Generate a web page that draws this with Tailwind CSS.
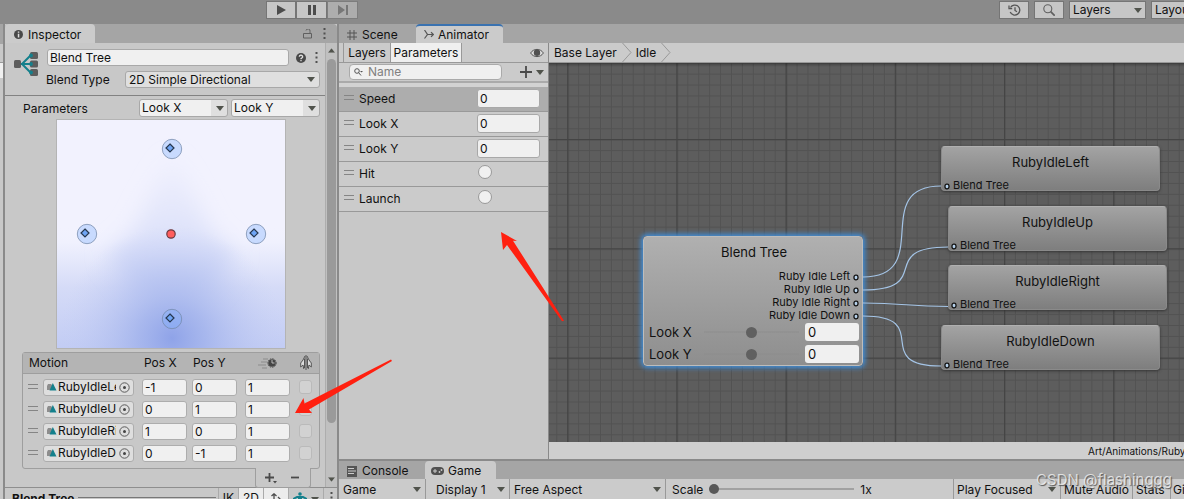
<!DOCTYPE html>
<html lang="en">
<head>
<meta charset="utf-8">
<title>Animator</title>
<script src="https://cdn.jsdelivr.net/npm/@tailwindcss/browser@4"></script>
</head>
<body class="relative flex h-screen flex-col overflow-hidden bg-[#8a8a8a] font-['Inter','Noto_Sans',sans-serif] text-xs leading-4 text-[#111]">

<svg width="0" height="0" class="absolute" aria-hidden="true">
  <symbol id="caret" viewBox="0 0 8 5"><path d="M0 0h8L4 5z" fill="#50534c"/></symbol>
  <symbol id="handle" viewBox="0 0 10 5"><path d="M0 .5h10M0 4.500h10" stroke="#858585"/></symbol>
  <symbol id="dots" viewBox="0 0 3 11"><path d="M.5 0h2v2h-2zM.5 4.500h2v2h-2zM.5 9h2v2h-2z" fill="#505050"/></symbol>
  <symbol id="clip" viewBox="0 0 10 8"><path d="M1 1h3l2 2-2 4H0V3z" fill="#8d8d8d"/><path d="M5.800 0L9.500 7.500H2.500z" fill="#14808c"/></symbol>
  <symbol id="pick" viewBox="0 0 11 11"><circle cx="5.500" cy="5.500" r="4.700" fill="none" stroke="#5a5a5a"/><circle cx="5.500" cy="5.500" r="1.500" fill="#444"/></symbol>
  <symbol id="port" viewBox="0 0 6 7"><rect x="1" y="1.200" width="4" height="4.600" rx="1.800" fill="#b5d0ea" stroke="#111" stroke-width="1.300"/></symbol>
  <symbol id="spot" viewBox="0 0 22 22"><circle cx="11" cy="11" r="9.700" fill="#7ab0ff" fill-opacity=".35" stroke="#7388aa" stroke-opacity=".75"/><path d="M9 6l4 4-4 4-4-4z" fill="#6fa5f5" stroke="#26374f" stroke-width="1.200"/></symbol>
</svg>

<!-- Main toolbar -->
<header class="flex h-6 shrink-0 items-start pl-[266px] pt-px">
  <button aria-label="Play" class="flex h-[18px] w-[30px] items-center justify-center border border-[#757575] bg-[#c6c6c6]"><svg width="9" height="10"><path d="M0 0l9 5-9 5z" fill="#4c4c4c"/></svg></button>
  <button aria-label="Pause" class="flex h-[18px] w-[31px] items-center justify-center border border-[#757575] bg-[#c6c6c6]"><svg width="8" height="10"><path d="M0 0h3v10H0zM5 0h3v10H5z" fill="#4c4c4c"/></svg></button>
  <button aria-label="Step" class="flex h-[18px] w-[31px] items-center justify-center border border-[#7d7d7d] bg-[#adadad]"><svg width="10" height="10"><path d="M0 0l7 5-7 5zM8 0h2v10H8z" fill="#777"/></svg></button>
  <div class="-mr-6 ml-auto flex shrink-0 gap-[5px]">
    <button aria-label="Undo history" class="flex h-[18px] w-[30px] items-center justify-center border border-[#757575] bg-[#c6c6c6]"><svg width="13" height="12" fill="none" stroke="#555" stroke-width="1.300"><path d="M2.500 3.500a5 5 0 1 1-.3 4.500M1 1.500v3.200h3.200M7 3.200v3.300l2 1.200"/></svg></button>
    <button aria-label="Search" class="flex h-[18px] w-[30px] items-center justify-center border border-[#757575] bg-[#c6c6c6]"><svg width="12" height="12" fill="none" stroke="#606060" stroke-width="1.100"><circle cx="4.800" cy="4.800" r="4"/><path d="M7.700 7.700l4 4" stroke-width="1.700"/></svg></button>
    <div class="relative">
      <select aria-label="Layers" class="h-[18px] w-[77px] appearance-none border border-[#757575] bg-[#c6c6c6] pl-[3px]"><option>Layers</option></select>
      <svg class="pointer-events-none absolute right-1 top-[7px] h-[5px] w-2"><use href="#caret"/></svg>
    </div>
    <select aria-label="Layout" class="h-[18px] w-[57px] appearance-none border border-[#757575] bg-[#c6c6c6] pl-[3px]"><option>Layout</option></select>
  </div>
</header>

<div class="flex min-h-0 flex-1">
  <!-- Edge of the docked panel on the left -->
  <div class="w-[3px] shrink-0 bg-[#c8c8c8]"><div class="h-5 bg-[#a5a5a5]"></div><div class="mt-[18px] h-4 border-t border-[#999] bg-[#f0f0f0]"></div></div>

  <!-- Inspector -->
  <aside class="ml-0.5 flex w-[332px] shrink-0 flex-col overflow-hidden bg-[#c8c8c8]">
    <div class="flex h-[19px] shrink-0 items-center rounded-t bg-[#a5a5a5]">
      <button class="flex h-full w-[90px] items-center gap-[5px] rounded-t bg-[#cbcbcb] pl-[9px] pt-0.5"><svg width="9" height="9"><circle cx="4.500" cy="4.500" r="4.500" fill="#484848"/><path d="M3.800 1.500h1.500v1.300H3.800zM3.800 3.700h1.500v3.800H3.800z" fill="#ddd"/></svg>Inspector</button>
      <svg class="ml-auto" width="9" height="10" fill="none" stroke="#606060"><path d="M.5 4.500h8v4.500h-8zM7 4.500V2.500a2 2 0 0 0-4-1"/></svg>
      <svg class="ml-[11px] mr-[11px] h-[11px] w-[3px]"><use href="#dots"/></svg>
    </div>

    <div class="flex h-[444px] shrink-0">
      <div class="min-w-0 flex-1">
        <!-- Asset header -->
        <div class="flex h-[53px] border-b border-[#828282] pl-2 pr-[5px] pt-[6px]">
          <svg class="mt-[3px] shrink-0" width="27" height="26"><rect x="1" y="8" width="7" height="8" rx="1.500" fill="#5d5d5d"/><rect x="17" y="0" width="8" height="7" rx="1.500" fill="#5d5d5d"/><rect x="17" y="8.500" width="8" height="7" rx="1.500" fill="#5d5d5d"/><rect x="17" y="17" width="8" height="7" rx="1.500" fill="#5d5d5d"/><path d="M18 3L9 12l9 9M8 12h11" fill="none" stroke="#14808c" stroke-width="2"/><circle cx="18" cy="3.500" r="1.900" fill="#14808c"/><circle cx="18" cy="12" r="1.900" fill="#14808c"/><circle cx="18" cy="20.500" r="1.900" fill="#14808c"/></svg>
          <div class="ml-[7px] flex-1">
            <div class="flex items-center">
              <input aria-label="Name" value="Blend Tree" class="h-[17px] w-[242px] rounded-[3px] border border-[#a8a8a8] bg-[#f0f0f0] px-0.5">
              <svg class="ml-[7px]" width="10" height="10"><circle cx="5" cy="5" r="5" fill="#484848"/><path d="M3.300 3.800a1.700 1.500 0 1 1 2.400 1.300L5 5.600v.6M5 7v1.300" fill="none" stroke="#ddd" stroke-width="1.300"/></svg>
              <svg class="ml-[9px] h-[11px] w-[3px]"><use href="#dots"/></svg>
            </div>
            <div class="mt-1 flex items-center justify-between">
              <label for="blend-type" class="-ml-px pt-0.5">Blend Type</label>
              <div class="relative">
                <select id="blend-type" class="block h-[17px] w-[195px] appearance-none rounded-[3px] border border-[#a8a8a8] bg-[#dfdfdf] pl-[3px]"><option>2D Simple Directional</option></select>
                <svg class="pointer-events-none absolute right-[5px] top-[6px] h-[5px] w-2"><use href="#caret"/></svg>
              </div>
            </div>
          </div>
        </div>

        <div class="flex items-center pl-[18px] pr-[5px] pt-[3px]">
          <span class="mr-auto pt-0.5">Parameters</span>
          <div class="relative mr-[3px]">
            <select aria-label="Parameter X" class="block h-[18px] w-[89px] appearance-none rounded-[3px] border border-[#a8a8a8] bg-linear-to-r from-[#f0f0f0] from-82% to-[#dfdfdf] to-82% pl-0.5"><option>Look X</option></select>
            <svg class="pointer-events-none absolute right-1 top-[7px] h-[5px] w-2"><use href="#caret"/></svg>
          </div>
          <div class="relative">
            <select aria-label="Parameter Y" class="block h-[18px] w-[89px] appearance-none rounded-[3px] border border-[#a8a8a8] bg-linear-to-r from-[#f0f0f0] from-82% to-[#dfdfdf] to-82% pl-0.5"><option>Look Y</option></select>
            <svg class="pointer-events-none absolute right-1 top-[7px] h-[5px] w-2"><use href="#caret"/></svg>
          </div>
        </div>

        <!-- Blend space: influence of the selected motion -->
        <svg class="ml-[51px] mt-0.5 block border border-[#b4b4b4]" width="230" height="230" viewBox="0 0 228 228">
          <defs>
            <linearGradient id="low" x1="0" y1="0" x2="0" y2="1"><stop offset="0" stop-color="#f2f2fe"/><stop offset=".12" stop-color="#f0f1fe"/><stop offset=".5" stop-color="#d5dbf7"/><stop offset="1" stop-color="#c2ccf4"/></linearGradient>
            <radialGradient id="core" gradientUnits="userSpaceOnUse" cx="115" cy="218" r="112"><stop offset="0" stop-color="#8fa3e8"/><stop offset=".3" stop-color="#9dafeb" stop-opacity=".75"/><stop offset="1" stop-color="#c3cdf4" stop-opacity="0"/></radialGradient>
            <linearGradient id="cone" gradientUnits="userSpaceOnUse" x1="0" y1="30" x2="0" y2="175"><stop offset="0" stop-color="#e0e4fa" stop-opacity="0"/><stop offset=".6" stop-color="#dde2fa"/><stop offset="1" stop-color="#c0cbf3"/></linearGradient>
            <filter id="soft" filterUnits="userSpaceOnUse" x="-40" y="-40" width="310" height="310"><feGaussianBlur stdDeviation="11"/></filter>
          </defs>
          <rect width="228" height="228" fill="#f2f2fe"/>
          <rect y="108" width="228" height="120" fill="url(#low)"/>
          <path d="M115 30L75 114 50 135 80 175h70l30-40-25-21z" fill="url(#cone)" filter="url(#soft)"/>
          <rect y="96" width="228" height="132" fill="url(#core)"/>
          <circle cx="114" cy="114" r="4.200" fill="#ff5d5d" stroke="#6b3a40" stroke-width="1.200"/>
          <use href="#spot" x="104" y="18" width="22" height="22"/>
          <use href="#spot" x="19" y="103" width="22" height="22"/>
          <use href="#spot" x="188" y="103" width="22" height="22"/>
          <use href="#spot" x="104" y="188" width="22" height="22"/>
        </svg>

        <!-- Motion list -->
        <div class="ml-[17px] mr-[5px] mt-[3px] h-[117px] rounded-[3px] border border-[#9e9e9e]">
          <table class="w-full table-fixed text-left">
            <colgroup><col class="w-[20px]"><col class="w-[99px]"><col class="w-[50px]"><col class="w-[53px]"><col class="w-[54px]"><col></colgroup>
            <thead>
              <tr class="h-5 border-b border-[#9e9e9e] bg-[#b4b4b4]">
                <th colspan="2" class="pl-1.5 font-normal">Motion</th><th class="pl-0.5 font-normal">Pos X</th><th class="pl-px font-normal">Pos Y</th>
                <th aria-label="Speed"><svg class="ml-[13px]" width="20" height="12"><path d="M5 2h5M3 5h6M0 8h8M4 11h5" stroke="#8c8c8c"/><circle cx="14" cy="6" r="3.800" fill="#444"/><circle cx="14" cy="6" r="4.300" fill="none" stroke="#555" stroke-dasharray="1.500 1"/><path d="M14 3v3h2.500" fill="none" stroke="#bbb"/></svg></th>
                <th aria-label="Mirror"><svg class="ml-px" width="12" height="15" fill="none" stroke="#555"><path d="M5 1L3 5 .7 8v4L3 10l.8 4M7 1l2 4 2.300 3v4L9 10l-.8 4" fill="#ddd"/><path d="M6 0v15M4.500 3.500V13M7.500 3.500V13"/></svg></th>
              </tr>
            </thead>
            <tbody>
              <tr class="h-[22px] align-top">
                <td class="pt-[10px]"><svg class="ml-[5px] h-[5px] w-2.5"><use href="#handle"/></svg></td>
                <td class="pt-[5px]"><div class="flex h-[17px] w-[91px] items-center rounded-[3px] border border-[#adadad] bg-[#dedede] pl-[3px] pr-[3px]"><svg class="h-2 w-2.5 shrink-0"><use href="#clip"/></svg><span class="ml-px w-[58px] overflow-hidden whitespace-nowrap">RubyIdleLeft</span><button aria-label="Pick motion" class="ml-auto"><svg class="h-[11px] w-[11px]"><use href="#pick"/></svg></button></div></td>
                <td class="pt-[5px]"><input aria-label="Pos X" value="-1" class="block h-[17px] w-[45px] rounded-[3px] border border-[#adadad] bg-[#f0f0f0] px-0.5"></td>
                <td class="pt-[5px]"><input aria-label="Pos Y" value="0" class="block h-[17px] w-[45px] rounded-[3px] border border-[#adadad] bg-[#f0f0f0] px-0.5"></td>
                <td class="pt-[5px]"><input aria-label="Speed" value="1" class="block h-[17px] w-[45px] rounded-[3px] border border-[#adadad] bg-[#f0f0f0] px-0.5"></td>
                <td class="pt-[6px]"><input aria-label="Mirror" type="checkbox" class="block h-[14px] w-[13px] appearance-none rounded-[3px] border border-[#bababa] bg-[#d2d2d2]"></td>
              </tr>
              <tr class="h-[22px] align-top">
                <td class="pt-[10px]"><svg class="ml-[5px] h-[5px] w-2.5"><use href="#handle"/></svg></td>
                <td class="pt-[5px]"><div class="flex h-[17px] w-[91px] items-center rounded-[3px] border border-[#adadad] bg-[#dedede] pl-[3px] pr-[3px]"><svg class="h-2 w-2.5 shrink-0"><use href="#clip"/></svg><span class="ml-px w-[58px] overflow-hidden whitespace-nowrap">RubyIdleU</span><button aria-label="Pick motion" class="ml-auto"><svg class="h-[11px] w-[11px]"><use href="#pick"/></svg></button></div></td>
                <td class="pt-[5px]"><input aria-label="Pos X" value="0" class="block h-[17px] w-[45px] rounded-[3px] border border-[#adadad] bg-[#f0f0f0] px-0.5"></td>
                <td class="pt-[5px]"><input aria-label="Pos Y" value="1" class="block h-[17px] w-[45px] rounded-[3px] border border-[#adadad] bg-[#f0f0f0] px-0.5"></td>
                <td class="pt-[5px]"><input aria-label="Speed" value="1" class="block h-[17px] w-[45px] rounded-[3px] border border-[#adadad] bg-[#f0f0f0] px-0.5"></td>
                <td class="pt-[6px]"><input aria-label="Mirror" type="checkbox" class="block h-[14px] w-[13px] appearance-none rounded-[3px] border border-[#bababa] bg-[#d2d2d2]"></td>
              </tr>
              <tr class="h-[22px] align-top">
                <td class="pt-[10px]"><svg class="ml-[5px] h-[5px] w-2.5"><use href="#handle"/></svg></td>
                <td class="pt-[5px]"><div class="flex h-[17px] w-[91px] items-center rounded-[3px] border border-[#adadad] bg-[#dedede] pl-[3px] pr-[3px]"><svg class="h-2 w-2.5 shrink-0"><use href="#clip"/></svg><span class="ml-px w-[58px] overflow-hidden whitespace-nowrap">RubyIdleRight</span><button aria-label="Pick motion" class="ml-auto"><svg class="h-[11px] w-[11px]"><use href="#pick"/></svg></button></div></td>
                <td class="pt-[5px]"><input aria-label="Pos X" value="1" class="block h-[17px] w-[45px] rounded-[3px] border border-[#adadad] bg-[#f0f0f0] px-0.5"></td>
                <td class="pt-[5px]"><input aria-label="Pos Y" value="0" class="block h-[17px] w-[45px] rounded-[3px] border border-[#adadad] bg-[#f0f0f0] px-0.5"></td>
                <td class="pt-[5px]"><input aria-label="Speed" value="1" class="block h-[17px] w-[45px] rounded-[3px] border border-[#adadad] bg-[#f0f0f0] px-0.5"></td>
                <td class="pt-[6px]"><input aria-label="Mirror" type="checkbox" class="block h-[14px] w-[13px] appearance-none rounded-[3px] border border-[#bababa] bg-[#d2d2d2]"></td>
              </tr>
              <tr class="h-[22px] align-top">
                <td class="pt-[10px]"><svg class="ml-[5px] h-[5px] w-2.5"><use href="#handle"/></svg></td>
                <td class="pt-[5px]"><div class="flex h-[17px] w-[91px] items-center rounded-[3px] border border-[#adadad] bg-[#dedede] pl-[3px] pr-[3px]"><svg class="h-2 w-2.5 shrink-0"><use href="#clip"/></svg><span class="ml-px w-[58px] overflow-hidden whitespace-nowrap">RubyIdleDown</span><button aria-label="Pick motion" class="ml-auto"><svg class="h-[11px] w-[11px]"><use href="#pick"/></svg></button></div></td>
                <td class="pt-[5px]"><input aria-label="Pos X" value="0" class="block h-[17px] w-[45px] rounded-[3px] border border-[#adadad] bg-[#f0f0f0] px-0.5"></td>
                <td class="pt-[5px]"><input aria-label="Pos Y" value="-1" class="block h-[17px] w-[45px] rounded-[3px] border border-[#adadad] bg-[#f0f0f0] px-0.5"></td>
                <td class="pt-[5px]"><input aria-label="Speed" value="1" class="block h-[17px] w-[45px] rounded-[3px] border border-[#adadad] bg-[#f0f0f0] px-0.5"></td>
                <td class="pt-[6px]"><input aria-label="Mirror" type="checkbox" class="block h-[14px] w-[13px] appearance-none rounded-[3px] border border-[#bababa] bg-[#d2d2d2]"></td>
              </tr>
            </tbody>
          </table>
        </div>
        <div class="relative -mt-px ml-auto mr-[14px] flex h-5 w-14 items-center gap-[13px] rounded-b-[3px] border border-t-0 border-[#9e9e9e] bg-[#c8c8c8] pl-[9px]">
          <button aria-label="Add motion"><svg width="13" height="12"><path d="M0 5.500h9M4.500 1v9" stroke="#4a4a4a" stroke-width="1.800"/><path d="M8 9h4l-2 2.500z" fill="#4a4a4a"/></svg></button>
          <button aria-label="Remove motion"><svg width="8" height="12"><path d="M0 5.500h8" stroke="#4a4a4a" stroke-width="1.800"/></svg></button>
        </div>
      </div>
      <!-- Scrollbar -->
      <div class="flex w-3 shrink-0 flex-col items-center border-l border-[#adadad] bg-[#c0c0c0] py-[5px]">
        <svg class="h-[5px] w-[7px] rotate-180" viewBox="0 0 8 5"><use href="#caret"/></svg>
        <div class="mt-[6px] h-[364px] w-[9px] rounded-full bg-[#9a9a9a]"></div>
        <svg class="mt-auto h-[5px] w-[7px]" viewBox="0 0 8 5"><use href="#caret"/></svg>
      </div>
    </div>

    <!-- Preview bar -->
    <div class="flex h-5 shrink-0 border-t border-[#8e8e8e] bg-[#c8c8c8]">
      <span class="pl-[7px] pt-[3px] font-bold">Blend Tree</span>
      <span class="ml-1 mt-[9px] h-px flex-1 bg-[#777]"></span>
      <button class="ml-0.5 flex w-[20px] justify-center border-l border-[#aaa] pt-0.5">IK</button>
      <button class="flex w-[25px] justify-center border-l border-[#aaa] bg-[#ececec] pt-0.5">2D</button>
      <button aria-label="Pivot" class="flex w-[26px] justify-center border-x border-[#aaa] bg-[#ececec] pt-[5px]"><svg width="12" height="12" fill="none" stroke="#4c4c4c" stroke-width="1.300"><path d="M4 12V1M1.500 3L4 .8 6.500 3M8 4l3 3-3 3"/></svg></button>
      <button aria-label="Avatar" class="flex w-[34px] items-start gap-1 pl-1 pt-1"><svg width="14" height="14"><circle cx="7" cy="2" r="1.800" fill="#14808c"/><path d="M0 7l4-2h6l4 2" fill="none" stroke="#14808c" stroke-width="2"/><path d="M5 4h4v4l1 6H4l1-6z" fill="#14808c"/></svg><svg class="mt-[5px] h-[5px] w-2"><use href="#caret"/></svg></button>
      <button aria-label="Preview menu" class="flex w-[14px] border-l border-[#aaa] pl-[6px] pt-1"><svg class="h-[11px] w-[3px]"><use href="#dots"/></svg></button>
    </div>
  </aside>

  <main class="ml-0.5 flex min-w-0 flex-1 flex-col">
    <!-- Animator window -->
    <div class="flex h-[19px] shrink-0 bg-[#a5a5a5]">
      <button class="flex w-[77px] items-center gap-[5px] pl-2 pt-0.5"><svg width="10" height="10" stroke="#555"><path d="M3 0v10M7 0v10M0 3h10M0 7h10"/></svg>Scene</button>
      <button class="flex w-[87px] items-center gap-1 rounded-t border-t-2 border-[#3a72b0] bg-[#cbcbcb] pl-2"><svg width="10" height="10" fill="none" stroke="#555" stroke-width="1.200"><path d="M.5 0l3 4.500-3 4M3.500 4.500h6M7 2.200l2.300 2.300L7 6.800"/></svg>Animator</button>
    </div>
    <div class="flex min-h-0 flex-1">
      <section class="w-[210px] shrink-0 border-r border-[#8a8a8a] bg-[#c8c8c8]">
        <div class="flex h-5 items-center border-b border-[#999] bg-[#cbcbcb] pl-1">
          <button class="h-full w-[47px] border-l border-[#999]">Layers</button>
          <button class="h-full w-[72px] border-x border-[#999] bg-[#efefef]">Parameters</button>
          <button aria-label="Toggle panel" class="ml-auto mr-1"><svg width="14" height="10"><path d="M.6 5C3.500.2 10.500.2 13.400 5 10.500 9.800 3.500 9.800.6 5z" fill="#ddd" stroke="#555"/><circle cx="7" cy="4.700" r="3.200" fill="#505050"/></svg></button>
        </div>
        <div class="flex h-5 items-center border-b-2 border-[#aaa] bg-[#cbcbcb] pl-2.5">
          <div class="flex h-4 w-[153px] items-center gap-[5px] rounded border border-[#aaa] bg-[#f0f0f0] pl-1"><svg class="shrink-0" width="9" height="8" fill="none" stroke="#555"><circle cx="3" cy="3" r="2.300"/><path d="M4.500 4.500L7 7.500"/><path d="M6 3h3L7.500 4.500z" fill="#555" stroke="none"/></svg><input aria-label="Filter parameters" placeholder="Name" class="w-full min-w-0 bg-transparent placeholder:text-[#808080]"></div>
          <button aria-label="Add parameter" class="ml-[18px] flex items-center gap-1"><svg width="12" height="12"><path d="M0 6h12M6 0v12" stroke="#4a4a4a" stroke-width="1.800"/></svg><svg class="h-[5px] w-2"><use href="#caret"/></svg></button>
        </div>
        <div class="h-1 bg-[#d2d2d2]"></div>
        <div class="flex h-[25px] items-center border-b border-[#999] bg-[#adadad] pl-[5px] pr-2">
          <svg class="mb-1 mr-[5px] h-[5px] w-2.5"><use href="#handle"/></svg><label for="p1">Speed</label><input id="p1" value="0" class="mb-0.5 ml-auto h-[19px] w-[63px] rounded-[3px] border border-[#a8a8a8] bg-[#f0f0f0] px-0.5">
        </div>
        <div class="flex h-[25px] items-center border-b border-[#999] bg-[#cbcbcb] pl-[5px] pr-2">
          <svg class="mb-1 mr-[5px] h-[5px] w-2.5"><use href="#handle"/></svg><label for="p2">Look X</label><input id="p2" value="0" class="mb-0.5 ml-auto h-[19px] w-[63px] rounded-[3px] border border-[#a8a8a8] bg-[#f0f0f0] px-0.5">
        </div>
        <div class="flex h-[25px] items-center border-b border-[#999] bg-[#cbcbcb] pl-[5px] pr-2">
          <svg class="mb-1 mr-[5px] h-[5px] w-2.5"><use href="#handle"/></svg><label for="p3">Look Y</label><input id="p3" value="0" class="mb-0.5 ml-auto h-[19px] w-[63px] rounded-[3px] border border-[#a8a8a8] bg-[#f0f0f0] px-0.5">
        </div>
        <div class="flex h-[25px] items-center border-b border-[#999] bg-[#cbcbcb] pl-[5px] pr-14">
          <svg class="mb-1 mr-[5px] h-[5px] w-2.5"><use href="#handle"/></svg><label for="p4">Hit</label><input id="p4" type="radio" class="mb-1 ml-auto h-[14px] w-[14px] appearance-none rounded-full border border-[#999] bg-[#f0f0f0]">
        </div>
        <div class="flex h-[25px] items-center border-b border-[#999] bg-[#cbcbcb] pl-[5px] pr-14">
          <svg class="mb-1 mr-[5px] h-[5px] w-2.5"><use href="#handle"/></svg><label for="p5">Launch</label><input id="p5" type="radio" class="mb-1 ml-auto h-[14px] w-[14px] appearance-none rounded-full border border-[#999] bg-[#f0f0f0]">
        </div>
      </section>

      <section class="flex min-w-0 flex-1 flex-col">
        <nav class="flex h-5 shrink-0 items-center border-b border-[#999] bg-[#cbcbcb] pl-[5px]">
          <a href="#base">Base Layer</a>
          <svg class="ml-[5px]" width="10" height="19" fill="none" stroke="#999"><path d="M.5 0l8.500 9.500L.5 19"/></svg>
          <a href="#idle" class="ml-1">Idle</a>
          <svg class="ml-[5px]" width="10" height="19" fill="none" stroke="#999"><path d="M.5 0l8.500 9.500L.5 19"/></svg>
        </nav>

        <!-- Node canvas -->
        <div class="relative min-h-0 flex-1 overflow-hidden bg-[#5d5d5d]">
          <svg class="absolute inset-0 h-full w-full">
            <defs>
              <pattern id="minor" width="10.920" height="10.930" x="7.300" y="10.600" patternUnits="userSpaceOnUse"><path d="M0 .5h11M.5 0v11" stroke="#525252" fill="none"/></pattern>
              <pattern id="major" width="109.200" height="109.300" x="18.200" y="76" patternUnits="userSpaceOnUse"><path d="M0 .7h110M.7 0v110" stroke="#444" stroke-width="1.300" fill="none"/></pattern>
            </defs>
            <rect width="100%" height="100%" fill="url(#minor)"/><rect width="100%" height="100%" fill="url(#major)"/>
          </svg>
          <div class="absolute inset-x-0 top-0 h-1 bg-linear-to-b from-black/30 to-transparent"></div>

          <div class="absolute left-[94px] top-[173px] flex h-[130px] w-[220px] flex-col rounded border border-[#bdbdbd] bg-linear-to-b from-[#b0b0b0] to-[#8e8e8e] pl-[5px] pr-[3px] pt-[7px] shadow-[0_0_5px_2px_#3f8fdc]">
            <h2 class="text-center text-[13px]">Blend Tree</h2>
            <ul class="mt-[10px] flex flex-col items-end text-[11px] leading-[13px]">
              <li class="flex items-center gap-[3px]">Ruby Idle Left<svg class="mt-px h-[7px] w-1.5"><use href="#port"/></svg></li>
              <li class="flex items-center gap-[3px]">Ruby Idle Up<svg class="mt-px h-[7px] w-1.5"><use href="#port"/></svg></li>
              <li class="flex items-center gap-[3px]">Ruby Idle Right<svg class="mt-px h-[7px] w-1.5"><use href="#port"/></svg></li>
              <li class="flex items-center gap-[3px]">Ruby Idle Down<svg class="mt-px h-[7px] w-1.5"><use href="#port"/></svg></li>
            </ul>
            <div class="mt-px flex items-center">
              <label for="lx" class="w-[55px] text-[13px]">Look X</label>
              <input id="lx" aria-label="Look X" type="range" class="h-[18px] w-[95px] appearance-none bg-linear-to-b from-transparent from-45% via-[#8c8c8c] via-50% to-transparent to-55% [&::-webkit-slider-thumb]:h-[11px] [&::-webkit-slider-thumb]:w-[11px] [&::-webkit-slider-thumb]:appearance-none [&::-webkit-slider-thumb]:rounded-full [&::-webkit-slider-thumb]:bg-[#606060]">
              <input aria-label="Look X value" value="0" class="ml-auto h-[18px] w-[54px] rounded-[3px] bg-[#f0f0f0] px-[3px] text-[13px]">
            </div>
            <div class="mt-1 flex items-center">
              <label for="ly" class="w-[55px] text-[13px]">Look Y</label>
              <input id="ly" aria-label="Look Y" type="range" class="h-[18px] w-[95px] appearance-none bg-linear-to-b from-transparent from-45% via-[#8c8c8c] via-50% to-transparent to-55% [&::-webkit-slider-thumb]:h-[11px] [&::-webkit-slider-thumb]:w-[11px] [&::-webkit-slider-thumb]:appearance-none [&::-webkit-slider-thumb]:rounded-full [&::-webkit-slider-thumb]:bg-[#606060]">
              <input aria-label="Look Y value" value="0" class="ml-auto h-[18px] w-[54px] rounded-[3px] bg-[#f0f0f0] px-[3px] text-[13px]">
            </div>
          </div>

          <div class="absolute left-[392px] top-[83px] h-[45px] w-[219px] rounded border border-t-[#b0b0b0] border-[#8a8a8a] bg-linear-to-b from-[#a3a3a3] to-[#7e7e7e] px-0.5 pt-[7px] shadow-[0_1px_3px_#333]">
            <h2 class="text-center text-[13px]">RubyIdleLeft</h2>
            <div class="mt-[9px] flex items-center gap-[3px] text-[11px] leading-[13px]"><svg class="mt-0.5 h-[7px] w-1.5"><use href="#port"/></svg>Blend Tree</div>
          </div>
          <div class="absolute left-[399px] top-[143px] h-[45px] w-[219px] rounded border border-t-[#b0b0b0] border-[#8a8a8a] bg-linear-to-b from-[#a3a3a3] to-[#7e7e7e] px-0.5 pt-[7px] shadow-[0_1px_3px_#333]">
            <h2 class="text-center text-[13px]">RubyIdleUp</h2>
            <div class="mt-[9px] flex items-center gap-[3px] text-[11px] leading-[13px]"><svg class="mt-0.5 h-[7px] w-1.5"><use href="#port"/></svg>Blend Tree</div>
          </div>
          <div class="absolute left-[399px] top-[202px] h-[45px] w-[219px] rounded border border-t-[#b0b0b0] border-[#8a8a8a] bg-linear-to-b from-[#a3a3a3] to-[#7e7e7e] px-0.5 pt-[7px] shadow-[0_1px_3px_#333]">
            <h2 class="text-center text-[13px]">RubyIdleRight</h2>
            <div class="mt-[9px] flex items-center gap-[3px] text-[11px] leading-[13px]"><svg class="mt-0.5 h-[7px] w-1.5"><use href="#port"/></svg>Blend Tree</div>
          </div>
          <div class="absolute left-[392px] top-[262px] h-[45px] w-[219px] rounded border border-t-[#b0b0b0] border-[#8a8a8a] bg-linear-to-b from-[#a3a3a3] to-[#7e7e7e] px-0.5 pt-[7px] shadow-[0_1px_3px_#333]">
            <h2 class="text-center text-[13px]">RubyIdleDown</h2>
            <div class="mt-[9px] flex items-center gap-[3px] text-[11px] leading-[13px]"><svg class="mt-0.5 h-[7px] w-1.5"><use href="#port"/></svg>Blend Tree</div>
          </div>

          <svg class="pointer-events-none absolute inset-0 h-full w-full" fill="none" stroke="#a4c4e6" stroke-width="1.200">
            <path d="M314 214C386 214 320 123 392 123"/>
            <path d="M314 227C386 227 327 184 399 184"/>
            <path d="M314 240C356 240 358 243.500 399 243.500"/>
            <path d="M314 253C386 253 320 303 392 303"/>
          </svg>
        </div>

        <footer class="flex h-[17px] shrink-0 justify-end overflow-hidden bg-[#cfcfcf] text-[10px] leading-[19px]"><span class="w-24 whitespace-nowrap">Art/Animations/RubyController</span></footer>
      </section>
    </div>

    <!-- Game window -->
    <div class="mt-0.5 flex h-[18px] shrink-0 bg-[#a5a5a5]">
      <button class="flex w-[86px] items-center gap-[5px] pl-2 pt-0.5"><svg width="10" height="11"><path d="M0 0h10v11H0z" fill="#555"/><path d="M1 2.500h6M1 5h8M1 7.500h6" stroke="#ccc"/></svg>Console</button>
      <button class="flex w-[71px] items-center gap-1 rounded-t bg-[#cbcbcb] pl-[6px] pt-0.5"><svg width="13" height="8"><rect width="13" height="8" rx="4" fill="#505050"/><path d="M2 4h4M4 2v4" stroke="#ccc"/><circle cx="8.500" cy="5" r=".9" fill="#ccc"/><circle cx="10.500" cy="3" r=".9" fill="#ccc"/></svg>Game</button>
    </div>
    <div class="flex h-5 shrink-0 items-stretch overflow-hidden whitespace-nowrap bg-[#cbcbcb]">
      <div class="relative w-[87px] shrink-0 border-r border-[#999]"><select aria-label="View" class="h-full w-full appearance-none pl-1 pt-px"><option>Game</option></select><svg class="pointer-events-none absolute right-1 top-2 h-[5px] w-2"><use href="#caret"/></svg></div>
      <div class="relative w-[84px] shrink-0 border-r border-[#999]"><select aria-label="Display" class="h-full w-full appearance-none pl-[10px] pt-px"><option>Display 1</option></select><svg class="pointer-events-none absolute right-1 top-2 h-[5px] w-2"><use href="#caret"/></svg></div>
      <div class="relative w-[156px] shrink-0 border-r border-[#999]"><select aria-label="Aspect" class="h-full w-full appearance-none pl-1 pt-px"><option>Free Aspect</option></select><svg class="pointer-events-none absolute right-1 top-2 h-[5px] w-2"><use href="#caret"/></svg></div>
      <div class="flex min-w-0 flex-1 items-center pl-[6px]">
        <label for="scale" class="mt-0.5">Scale</label>
        <input id="scale" type="range" value="0" class="ml-1.5 h-[20px] w-[145px] appearance-none bg-linear-to-b from-transparent from-45% via-[#777] via-50% to-transparent to-55% [&::-webkit-slider-thumb]:h-[10px] [&::-webkit-slider-thumb]:w-[10px] [&::-webkit-slider-thumb]:appearance-none [&::-webkit-slider-thumb]:rounded-full [&::-webkit-slider-thumb]:bg-[#585858]">
        <span class="ml-[6px] mt-0.5">1x</span>
      </div>
      <div class="relative w-[107px] shrink-0 border-l border-[#999]"><select aria-label="Play mode" class="h-full w-full appearance-none pl-[3px] pt-px"><option>Play Focused</option></select><svg class="pointer-events-none absolute right-1 top-2 h-[5px] w-2"><use href="#caret"/></svg></div>
      <button class="w-[72px] shrink-0 border-l border-[#999] pl-[3px] pt-px text-left">Mute Audio</button>
      <button class="w-[38px] shrink-0 border-l border-[#999] pl-[3px] pt-px text-left">Stats</button>
      <button class="w-[14px] shrink-0 overflow-hidden border-l border-[#999] pl-[2px] pt-px text-left">Gizmos</button>
    </div>
  </main>
</div>

<!-- Annotation arrows and author mark -->
<svg class="pointer-events-none absolute left-0 top-0 h-full w-full" fill="#ff2010">
  <path d="M501 232l16 9-4-.3 51 80-2 .5L507 245l-4 5z"/>
  <path d="M295 413l8.500-15 1 5.500L391 359.500l1 1.500-83 48.500 3 3.500z"/>
</svg>
<p class="pointer-events-none absolute bottom-[9px] right-3 text-[15px] leading-5 text-white/70 [text-shadow:1px_1px_1px_#555]">CSDN @flashinggg</p>
</body>
</html>
